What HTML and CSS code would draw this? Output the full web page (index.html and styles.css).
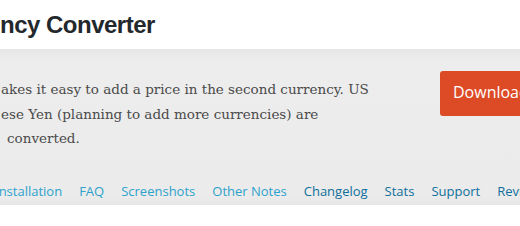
FILE: index.html
```html
<!DOCTYPE html>
<html>
<head>
<meta charset="utf-8">
<link rel="stylesheet" href="styles.css">
</head>
<body>
<div class="page">
  <header class="plugin-header">
    <h1 class="plugin-title">ncy Converter</h1>
  </header>
  <section class="band">
    <div class="intro">
      <div class="description">
        <span class="line">akes it easy to add a price in the second currency. US</span>
        <span class="line">ese Yen (planning to add more currencies) are</span>
        <span class="line line-indent">converted.</span>
      </div>
      <a class="download" href="#">Download Version</a>
    </div>
    <nav class="tabs">
      <a class="tab tab-light" href="#">Installation</a>
      <a class="tab tab-light" href="#">FAQ</a>
      <a class="tab tab-light" href="#">Screenshots</a>
      <a class="tab tab-light" href="#">Other Notes</a>
      <a class="tab" href="#">Changelog</a>
      <a class="tab" href="#">Stats</a>
      <a class="tab" href="#">Support</a>
      <a class="tab" href="#">Reviews</a>
    </nav>
  </section>
</div>
</body>
</html>
```

FILE: styles.css
```css
html, body {
  margin: 0;
  padding: 0;
  background: #fff;
  overflow: hidden;
}

.page {
  width: 700px;
}

.plugin-header {
  height: 49px;
  box-sizing: border-box;
  padding-top: 13px;
}

.plugin-title {
  margin: 0;
  font-family: "Liberation Sans", Arial, sans-serif;
  font-weight: bold;
  font-size: 24px;
  line-height: 24px;
  letter-spacing: -0.5px;
  color: #23282d;
  white-space: nowrap;
}

.band {
  background: linear-gradient(#e6e6e6, #ededed 12px, #ebebeb 148px, #e6e6e6);
  height: 156px;
  box-sizing: border-box;
  padding-top: 22px;
}

.intro {
  display: flex;
  align-items: flex-start;
  gap: 28px;
}

.description {
  width: 412px;
  margin-top: 6px;
  font-family: "DejaVu Serif", Georgia, serif;
  font-size: 13.5px;
  line-height: 24.5px;
  color: #4a4a4a;
}

.line {
  display: block;
  white-space: nowrap;
  padding-left: 1px;
}

.line-indent {
  padding-left: 7px;
}

.download {
  display: block;
  flex: none;
  background: #dd4a26;
  color: #fff;
  text-decoration: none;
  font-family: "Open Sans", sans-serif;
  font-size: 16px;
  padding: 10px 13px 13px;
  border-radius: 3px;
  white-space: nowrap;
}

.tabs {
  display: flex;
  gap: 17px;
  margin-top: 30px;
  margin-left: -5px;
  font-family: "Open Sans", sans-serif;
  font-size: 13px;
  line-height: 20px;
  white-space: nowrap;
}

.tab {
  color: #0e6f9c;
  text-decoration: none;
}

.tab-light {
  color: #2ea2cc;
}
```
